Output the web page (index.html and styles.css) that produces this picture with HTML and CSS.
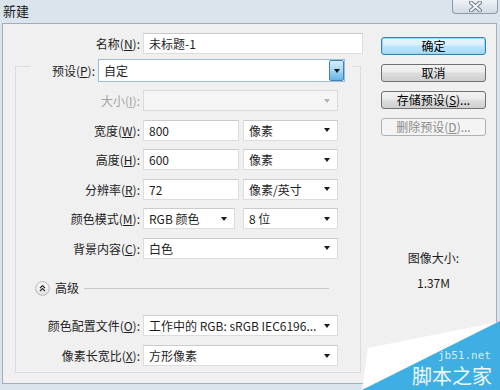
FILE: index.html
```html
<!DOCTYPE html>
<html>
<head>
    <title>新建</title>
    <link rel="stylesheet" href="styles.css">
</head>
<body>
    <div class="window">
        <div class="titlebar">
            <span class="title">新建</span>
            <div class="close">
                <svg width="13" height="11" viewBox="0 0 13 11">
                    <path d="M2 1.5 L11 9.5 M11 1.5 L2 9.5" stroke="#6d7a8c" stroke-width="4" stroke-linecap="round"/>
                    <path d="M2 1.5 L11 9.5 M11 1.5 L2 9.5" stroke="#f4f6f9" stroke-width="2" stroke-linecap="round"/>
                </svg>
            </div>
        </div>

        <div class="client">
            <div class="main">
                <div class="row name-row">
                    <label class="lbl name-lbl">名称(<u>N</u>):</label>
                    <div class="input w-name">未标题-1</div>
                </div>

                <div class="group">
                    <div class="preset">
                        <label class="lbl preset-lbl">预设(<u>P</u>):</label>
                        <div class="select focused w-preset">
                            <span>自定</span>
                            <span class="drop-btn"><i class="arrow"></i></span>
                        </div>
                    </div>

                    <div class="rows">
                        <div class="row">
                            <label class="lbl disabled">大小(<u>I</u>):</label>
                            <div class="select off w-full"><span></span><i class="arrow"></i></div>
                        </div>
                        <div class="row">
                            <label class="lbl">宽度(<u>W</u>):</label>
                            <div class="input w-num">800</div>
                            <div class="select w-unit"><span>像素</span><i class="arrow"></i></div>
                        </div>
                        <div class="row">
                            <label class="lbl">高度(<u>H</u>):</label>
                            <div class="input w-num">600</div>
                            <div class="select w-unit"><span>像素</span><i class="arrow"></i></div>
                        </div>
                        <div class="row">
                            <label class="lbl">分辨率(<u>R</u>):</label>
                            <div class="input w-num">72</div>
                            <div class="select w-unit"><span>像素/英寸</span><i class="arrow"></i></div>
                        </div>
                        <div class="row">
                            <label class="lbl">颜色模式(<u>M</u>):</label>
                            <div class="select w-mode"><span>RGB 颜色</span><i class="arrow"></i></div>
                            <div class="select w-unit bits"><span>8 位</span><i class="arrow"></i></div>
                        </div>
                        <div class="row">
                            <label class="lbl">背景内容(<u>C</u>):</label>
                            <div class="select w-full"><span>白色</span><i class="arrow"></i></div>
                        </div>
                    </div>

                    <div class="advanced">
                        <svg class="adv-icon" width="15" height="15" viewBox="0 0 15 15">
                            <defs>
                                <linearGradient id="knob" x1="0" y1="0" x2="0" y2="1">
                                    <stop offset="0" stop-color="#ffffff"/>
                                    <stop offset="1" stop-color="#e1e1e1"/>
                                </linearGradient>
                            </defs>
                            <circle cx="7.5" cy="7.5" r="6.8" fill="url(#knob)" stroke="#b4b4b4"/>
                            <path d="M5 7 L7.5 4.6 L10 7 M5 10 L7.5 7.6 L10 10" fill="none" stroke="#333" stroke-width="1.3"/>
                        </svg>
                        <span class="adv-text">高级</span>
                        <span class="adv-line"></span>
                    </div>

                    <div class="rows adv-rows">
                        <div class="row">
                            <label class="lbl">颜色配置文件(<u>O</u>):</label>
                            <div class="select w-full"><span>工作中的 RGB: sRGB IEC6196...</span><i class="arrow"></i></div>
                        </div>
                        <div class="row">
                            <label class="lbl">像素长宽比(<u>X</u>):</label>
                            <div class="select w-full"><span>方形像素</span><i class="arrow"></i></div>
                        </div>
                    </div>
                </div>
            </div>

            <div class="side">
                <button class="btn default">确定</button>
                <button class="btn">取消</button>
                <button class="btn">存储预设(<u>S</u>)...</button>
                <button class="btn" disabled>删除预设(<u>D</u>)...</button>
                <div class="size-info">
                    <div>图像大小:</div>
                    <div class="size-value">1.37M</div>
                </div>
            </div>
        </div>

        <svg class="watermark" width="140" height="72" viewBox="0 0 140 72">
            <polygon points="8,30 138,4 2,72" fill="#ffffff"/>
            <polygon points="2,72 140,3 140,72" fill="#3eaee3"/>
            <text x="78" y="41" class="wm-url">jb51.net</text>
            <text x="52" y="66" class="wm-name">脚本之家</text>
        </svg>
    </div>
</body>
</html>
```

FILE: styles.css
```css
body {
    margin: 0;
    padding: 0;
    font-family: "Noto Sans CJK SC", "Noto Sans", sans-serif;
    font-size: 12px;
    color: #1e1e1e;
}
.window {
    position: relative;
    width: 500px;
    height: 390px;
    background-color: #dbe3ec;
    overflow: hidden;
}
.titlebar {
    display: flex;
    justify-content: space-between;
    align-items: flex-start;
    height: 23px;
}
.title {
    padding-left: 3px;
    font-size: 13px;
    line-height: 22px;
    color: #1a1a1a;
}
.close {
    display: flex;
    align-items: center;
    justify-content: center;
    width: 44px;
    height: 13px;
    margin-right: 2px;
    border: 1px solid #8e99a8;
    border-top: none;
    border-radius: 0 0 4px 4px;
    background: linear-gradient(#eef2f6, #d2dae4);
}
.client {
    display: flex;
    width: 495px;
    height: 361px;
    margin-left: 2px;
    box-sizing: border-box;
    border: 1px solid #a3adb9;
    background-color: #f0f0f0;
}
.main {
    width: 364px;
    padding-top: 9px;
}
.row {
    display: flex;
    align-items: center;
    gap: 3px;
    height: 21px;
}
.lbl {
    flex: none;
    width: 124px;
    text-align: right;
    line-height: 21px;
    white-space: nowrap;
}
.lbl.disabled {
    color: #a3a3a3;
}
.name-lbl {
    width: 137px;
}
.input, .select {
    box-sizing: border-box;
    height: 21px;
    line-height: 19px;
    padding-left: 5px;
    background-color: #fff;
    border: 1px solid #dcdcdc;
    border-top-color: #cbcbcb;
    white-space: nowrap;
}
.select {
    display: flex;
    align-items: center;
    justify-content: space-between;
    padding-right: 7px;
}
.arrow {
    width: 0;
    height: 0;
    border-left: 3.5px solid transparent;
    border-right: 3.5px solid transparent;
    border-top: 4px solid #1a1a1a;
}
.select.off {
    background-color: #f5f5f5;
    border-color: #d9d9d9;
}
.select.off .arrow {
    border-top-color: #b5b5b5;
}
.w-name {
    width: 220px;
}
.w-num {
    width: 96px;
}
.w-unit {
    width: 95px;
    margin-left: 1px;
}
.w-mode {
    width: 92px;
}
.bits {
    margin-left: 5px;
}
.w-full {
    width: 195px;
}
.group {
    width: 346px;
    box-sizing: border-box;
    margin: 12px 0 0 12px;
    padding-bottom: 6px;
    border: 1px solid #d5dce3;
}
.preset {
    display: flex;
    align-items: center;
    width: fit-content;
    margin: -8px 0 0 15px;
    padding-right: 7px;
    background-color: #f0f0f0;
}
.preset-lbl {
    width: 64px;
    padding-right: 3px;
}
.w-preset {
    width: 247px;
    height: 23px;
    line-height: 21px;
    padding-right: 0;
    border-color: #9cbcd8;
}
.drop-btn {
    display: flex;
    align-items: center;
    justify-content: center;
    width: 15px;
    height: 21px;
    box-sizing: border-box;
    border: 1px solid #3f83b8;
    border-radius: 2px;
    background: linear-gradient(#d6eefb, #a6d6f2 50%, #62b5e4);
}
.rows {
    display: flex;
    flex-direction: column;
    gap: 8.5px;
    margin-top: 8px;
}
.advanced {
    display: flex;
    align-items: center;
    height: 14px;
    margin: 22.5px 31px 0 19px;
}
.adv-icon {
    flex: none;
}
.adv-text {
    margin-left: 5px;
    line-height: 14px;
}
.adv-line {
    flex: 1;
    height: 1px;
    margin-left: 5px;
    background-color: #c9c9c9;
}
.adv-rows {
    gap: 9px;
    margin-top: 20px;
}
.side {
    display: flex;
    flex-direction: column;
    width: 105px;
    margin-left: 14px;
    padding-top: 13px;
}
.btn {
    height: 18px;
    margin: 0 0 9px 0;
    padding: 0;
    font-family: inherit;
    font-size: 12px;
    line-height: 16px;
    color: #000;
    border: 1px solid #707070;
    border-radius: 3px;
    background: linear-gradient(#f2f2f2, #ebebeb 45%, #dddddd 50%, #cfcfcf);
}
.btn.default {
    border-color: #3c7fb1;
    box-shadow: inset 0 0 0 1px #8fdcfa;
    background: linear-gradient(#eaf6fd, #d9f0fc 45%, #bee6fd 50%, #a7d9f5);
}
.btn:disabled {
    color: #8a8a8a;
    border-color: #adb2b5;
    background: #f4f4f4;
}
.size-info {
    margin-top: 105px;
    text-align: center;
    line-height: 16px;
}
.size-value {
    margin-top: 9px;
}
.watermark {
    position: absolute;
    right: 0;
    bottom: 0;
}
.wm-url {
    font-family: "DejaVu Sans Mono", monospace;
    font-size: 11px;
    fill: #d4eefa;
}
.wm-name {
    font-family: "Noto Sans CJK SC", sans-serif;
    font-size: 20px;
    fill: #eef8fd;
}
```
